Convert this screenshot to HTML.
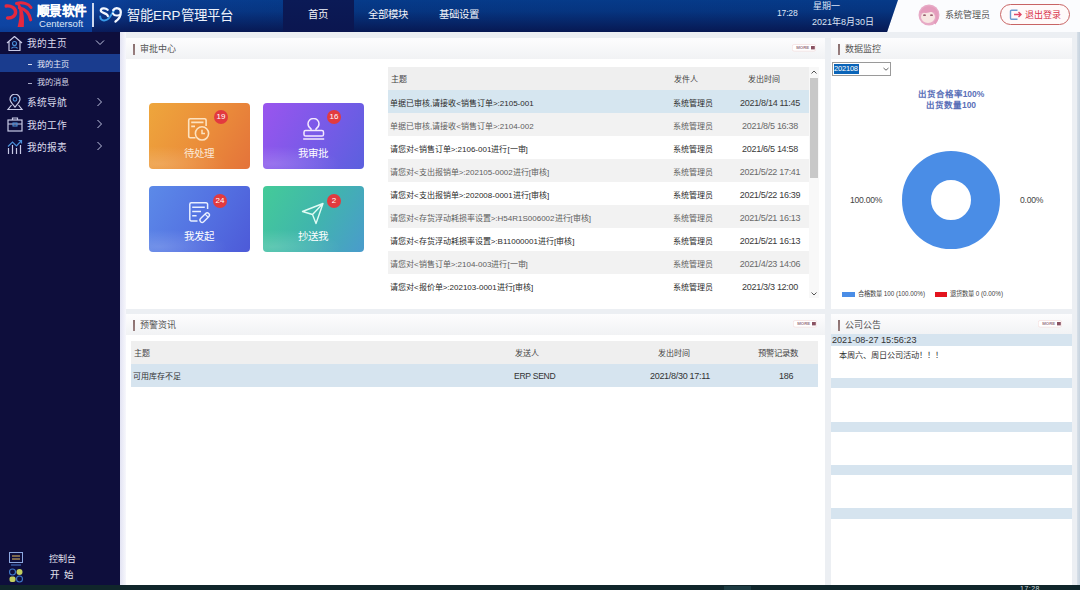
<!DOCTYPE html>
<html lang="zh-CN">
<head>
<meta charset="utf-8">
<style>
*{margin:0;padding:0;box-sizing:border-box;}
html,body{width:1080px;height:590px;overflow:hidden;background:#eceff3;font-family:"Liberation Sans",sans-serif;}
.abs{position:absolute;}
#hdr{position:absolute;left:0;top:0;width:1080px;height:32px;background:#fbfcfe;}
#hdrblue{position:absolute;left:0;top:0;width:898px;height:32px;
 background:linear-gradient(180deg,rgba(8,10,60,0) 0%,rgba(8,10,60,0.12) 35%,rgba(8,10,60,0.7) 100%),linear-gradient(90deg,#0f47a6 0px,#0e45a2 92px,#0a3d92 130px,#063b8a 300px,#063a88 100%);
 clip-path:polygon(0 0,898px 0,887px 32px,0 32px);}
#logobg{position:absolute;left:0;top:0;width:92px;height:32px;background:linear-gradient(180deg,#0f48a8 0%,#0e44a2 80%,#0c3c94 100%);}
.w{color:#fff;}
#side{position:absolute;left:0;top:32px;width:120px;height:553px;background:#0e0e3c;}
#taskbar{position:absolute;left:0;top:585px;width:1080px;height:5px;background:#10262b;}
.panel{position:absolute;background:#fff;}
.ptitle{position:absolute;left:0;top:0;right:0;height:21px;background:linear-gradient(180deg,#fdfdfe,#f1f2f4);}
.acc{position:absolute;left:6.5px;top:6px;width:2px;height:11px;background:linear-gradient(180deg,#8a7070,#9a8080);}
.ptxt{position:absolute;left:14px;top:5px;font-size:9px;color:#555;line-height:12px;}
.more{position:absolute;width:21px;height:8px;font-size:5px;color:#8a4a4a;line-height:8px;}
.t{position:absolute;white-space:nowrap;}
</style>
</head>
<body>
<div id="hdr"></div>
<div id="hdrblue"></div>
<div id="logobg"></div>

<!-- header content -->
<svg class="abs" style="left:2px;top:0px" width="36" height="32" viewBox="0 0 36 32">
 <path d="M4.2 6 C9.5 5.4 13.6 8.4 13.6 12 C13.6 15.8 9.8 18.4 5.6 18" fill="none" stroke="#e4283f" stroke-width="3.4" stroke-linecap="round"/>
 <path d="M14.2 3.4 C18 8 18.6 15 15.6 27 L21.8 27 C22.8 16 21 8.5 17 3 Z" fill="#e4283f"/>
 <path d="M14.5 3.4 C20.5 2 26.5 3.5 29 7.5" fill="none" stroke="#e4283f" stroke-width="3" stroke-linecap="round"/>
 <path d="M17.5 7.8 C23 9 27.2 13 28.6 19.8" fill="none" stroke="#e4283f" stroke-width="3.2" stroke-linecap="round"/>
</svg>
<div class="t w" style="left:37px;top:2.5px;font-size:12.6px;font-weight:bold;line-height:16px;letter-spacing:-0.7px;-webkit-text-stroke:0.2px #fff;">顺景软件</div>
<div class="t" style="left:39px;top:18px;font-size:9.6px;line-height:12px;color:#dfe6f5;">Centersoft</div>
<div class="abs" style="left:92px;top:3px;width:1.5px;height:24px;background:#cfd8ee;"></div>
<svg class="abs" style="left:94px;top:2px" width="32" height="28" viewBox="94 2 32 28">
 <path d="M100.2 16.5 C100.6 21.5 106.5 22 110.2 16.5 L114 10.5" fill="none" stroke="#3a9be8" stroke-width="1.9" stroke-linecap="round"/>
 <path d="M107.6 9.8 C105.5 7.6 100.8 7.8 100.8 10.6 C100.8 13.4 107.5 12.8 107.8 16" fill="none" stroke="#f4f8ff" stroke-width="2.3" stroke-linecap="round"/>
 <path d="M113.2 10.2 C115 7.2 120.8 7.6 120.8 12 C120.8 16.5 118.5 19.5 115.5 21.5" fill="none" stroke="#f4f8ff" stroke-width="2.3" stroke-linecap="round"/>
 <path d="M113 13.5 C114 15.5 116.5 16 119.5 15" fill="none" stroke="#f4f8ff" stroke-width="2" stroke-linecap="round"/>
</svg>
<div class="t w" style="left:127px;top:6px;font-size:13.4px;line-height:20px;color:#eef2fb;">智能ERP管理平台</div>
<div class="abs" style="left:283px;top:0;width:71px;height:32px;background:linear-gradient(180deg,#0b1a56 0%,#0b1650 100%);"></div>
<div class="t w" style="left:307.5px;top:7.5px;font-size:10.4px;line-height:14px;color:#f2f4fa;">首页</div>
<div class="t w" style="left:367.5px;top:7.5px;font-size:10.4px;line-height:14px;color:#f2f4fa;">全部模块</div>
<div class="t w" style="left:438.5px;top:7.5px;font-size:10.4px;line-height:14px;color:#f2f4fa;">基础设置</div>
<div class="t w" style="left:777px;top:8px;font-size:8.6px;letter-spacing:-0.2px;line-height:11px;color:#dde4f4;">17:28</div>
<div class="t w" style="left:813px;top:1px;font-size:9px;line-height:11px;color:#dde4f4;">星期一</div>
<div class="t w" style="left:812px;top:17px;font-size:9px;line-height:11px;color:#dde4f4;">2021年8月30日</div>
<svg class="abs" style="left:918px;top:4px" width="22" height="22" viewBox="0 0 22 22">
 <circle cx="11" cy="11" r="10.5" fill="#e7aac6"/>
 <ellipse cx="10" cy="13" rx="7" ry="6" fill="#f7e6e2"/>
 <path d="M2 9 C4 3 9 1.5 13 2.5 C17 3.5 20 6 20.5 11 C18 8 14 7.5 11 8.5 C8 9.5 5 8.5 2 9 Z" fill="#e49cbc"/>
 <ellipse cx="6.5" cy="11.2" rx="1.5" ry="0.9" fill="#9a6070"/>
 <ellipse cx="13.5" cy="11.2" rx="1.5" ry="0.9" fill="#9a6070"/>
 <path d="M17 9 C20 11 20 16 16.5 19.5" fill="none" stroke="#e49cbc" stroke-width="2.5"/>
</svg>
<div class="t" style="left:945px;top:10px;font-size:9px;line-height:11px;color:#555;">系统管理员</div>
<div class="abs" style="left:1000px;top:4px;width:70px;height:21px;border-radius:11px;border:1.2px solid #c86464;background:#fffafa;"></div>
<svg class="abs" style="left:1009px;top:8px" width="14" height="13" viewBox="0 0 14 13">
 <path d="M8.5 2.2 H2.5 A1 1 0 0 0 1.5 3.2 V10.3 A1 1 0 0 0 2.5 11.3 H8.5" fill="none" stroke="#6a9ad0" stroke-width="1.4"/>
 <path d="M5 6.5 H12 M9.5 4 L12 6.5 L9.5 9" fill="none" stroke="#e04868" stroke-width="1.4"/>
</svg>
<div class="t" style="left:1025px;top:10px;font-size:9px;line-height:11px;color:#d8344a;">退出登录</div>

<div id="side"></div>

<!-- sidebar content -->
<div class="abs" style="left:0;top:54px;width:120px;height:18px;background:#1a3c8e;"></div>
<svg class="abs" style="left:5px;top:35px" width="19" height="17" viewBox="0 0 19 17">
 <path d="M2 8 L9.5 1.5 L17 8 M4 6.5 V15.5 H15 V6.5" fill="none" stroke="#c9cbe6" stroke-width="1.2" stroke-linejoin="round"/>
 <circle cx="9.5" cy="8.5" r="2" fill="none" stroke="#4a8fd8" stroke-width="1.1"/>
 <path d="M6.5 13.5 C7 11.5 12 11.5 12.5 13.5" fill="none" stroke="#4a8fd8" stroke-width="1.1"/>
</svg>
<div class="t w" style="left:27px;top:37px;font-size:9.7px;line-height:13px;color:#dcdcee;">我的主页</div>
<svg class="abs" style="left:95px;top:39px" width="10" height="7" viewBox="0 0 10 7"><path d="M1 1.5 L5 5.5 L9 1.5" fill="none" stroke="#c0c4e0" stroke-width="1"/></svg>
<div class="abs" style="left:28px;top:63.5px;width:4px;height:1px;background:#d8ddf0;"></div>
<div class="t" style="left:36.5px;top:58.5px;font-size:8.2px;line-height:11px;color:#e4e8f6;">我的主页</div>
<div class="abs" style="left:28px;top:82.5px;width:4px;height:1px;background:#a8acc8;"></div>
<div class="t" style="left:36.5px;top:77px;font-size:8.2px;line-height:11px;color:#d4d6e8;">我的消息</div>

<svg class="abs" style="left:6px;top:94px" width="18" height="17" viewBox="0 0 18 17">
 <path d="M9 13 C6 9.5 4 7.5 4 5.2 A5 5 0 0 1 14 5.2 C14 7.5 12 9.5 9 13 Z" fill="none" stroke="#c9cbe6" stroke-width="1.2"/>
 <circle cx="9" cy="5.3" r="1.8" fill="none" stroke="#4a8fd8" stroke-width="1.1"/>
 <path d="M5.5 11 L2 15.5 H16 L12.5 11" fill="none" stroke="#c9cbe6" stroke-width="1.2"/>
</svg>
<div class="t w" style="left:27px;top:96px;font-size:9.7px;line-height:13px;color:#dcdcee;">系统导航</div>
<svg class="abs" style="left:96px;top:97px" width="7" height="10" viewBox="0 0 7 10"><path d="M1.5 1 L5.5 5 L1.5 9" fill="none" stroke="#c0c4e0" stroke-width="1"/></svg>

<svg class="abs" style="left:6px;top:116px" width="18" height="17" viewBox="0 0 18 17">
 <rect x="2" y="4" width="14" height="11" fill="none" stroke="#c9cbe6" stroke-width="1.2"/>
 <path d="M6.5 4 V2 H11.5 V4" fill="none" stroke="#c9cbe6" stroke-width="1.2"/>
 <path d="M2 8 H16" stroke="#c9cbe6" stroke-width="1"/>
 <rect x="7" y="7" width="4" height="3" fill="none" stroke="#4a8fd8" stroke-width="1.1"/>
</svg>
<div class="t w" style="left:27px;top:119px;font-size:9.7px;line-height:13px;color:#dcdcee;">我的工作</div>
<svg class="abs" style="left:96px;top:119px" width="7" height="10" viewBox="0 0 7 10"><path d="M1.5 1 L5.5 5 L1.5 9" fill="none" stroke="#c0c4e0" stroke-width="1"/></svg>

<svg class="abs" style="left:6px;top:138px" width="18" height="17" viewBox="0 0 18 17">
 <path d="M2.5 16 V10 M6.5 16 V7 M10.5 16 V10 M14.5 16 V7" stroke="#c9cbe6" stroke-width="1.2"/>
 <path d="M2 8.5 L6.5 4 L10.5 8 L15.5 2.5 M12.5 2.5 H15.5 V5.5" fill="none" stroke="#4a8fd8" stroke-width="1.2"/>
</svg>
<div class="t w" style="left:27px;top:140.5px;font-size:9.7px;line-height:13px;color:#dcdcee;">我的报表</div>
<svg class="abs" style="left:96px;top:141px" width="7" height="10" viewBox="0 0 7 10"><path d="M1.5 1 L5.5 5 L1.5 9" fill="none" stroke="#c0c4e0" stroke-width="1"/></svg>

<svg class="abs" style="left:8px;top:551px" width="16" height="32" viewBox="0 0 16 32">
 <rect x="1.5" y="1.5" width="13" height="10" fill="none" stroke="#8da8e0" stroke-width="1"/>
 <path d="M4 5 H12 M4 8 H12" stroke="#e8c060" stroke-width="1"/>
 <path d="M3 14 H13" stroke="#4f7fd0" stroke-width="1"/>
 <circle cx="4.5" cy="21" r="3" fill="none" stroke="#3f78c8" stroke-width="1.1"/>
 <circle cx="11.5" cy="21" r="3" fill="#c4d060"/>
 <rect x="1.5" y="25.5" width="6" height="5.5" rx="2" fill="#c4d060"/>
 <circle cx="11.5" cy="28" r="3" fill="none" stroke="#3f78c8" stroke-width="1.1"/>
</svg>
<div class="t" style="left:49px;top:554px;font-size:9px;line-height:11px;color:#e4e4f0;">控制台</div>
<div class="t" style="left:50px;top:569px;font-size:9.5px;line-height:11px;color:#e4e4f0;letter-spacing:4px;">开始</div>


<div id="taskbar"></div>
<div class="abs" style="left:724px;top:586px;width:27px;height:4px;background:#1d3b42;"></div>
<div class="t" style="left:1020px;top:585px;font-size:7px;line-height:8px;color:#cfd8dc;letter-spacing:0.5px;">17:28</div>

<!-- content strip left gradient -->
<div class="abs" style="left:120px;top:32px;width:6px;height:553px;background:linear-gradient(90deg,#e2e3f3,#f7f7fc);"></div>

<!-- Panel 1 -->
<div class="panel" style="left:126px;top:38px;width:699px;height:271px;">
  <div class="ptitle"></div>
  <div class="acc"></div>
  <div class="ptxt">审批中心</div>
</div>

<!-- cards -->
<style>
.card{position:absolute;width:101px;height:66px;border-radius:4px;overflow:hidden;}
.card::after{content:"";position:absolute;left:0;top:0;right:0;bottom:0;background:radial-gradient(ellipse 90% 35% at 10% 92%,rgba(255,255,255,0.16),rgba(255,255,255,0) 75%);}
.card .lbl{position:absolute;left:-1px;right:0;top:44px;text-align:center;font-size:10.5px;line-height:13px;color:#fff;}
.badge{position:absolute;width:14px;height:14px;border-radius:50%;background:#e23a3f;color:#fff;font-size:8px;line-height:14px;text-align:center;}
</style>
<div class="card" style="left:149px;top:103px;background:linear-gradient(120deg,#eea63c 0%,#eb8f3a 50%,#e4733a 100%);">
 <div class="lbl" style="color:#fbe9d6;">待处理</div>
 <svg class="abs" style="left:38px;top:14px" width="26" height="26" viewBox="0 0 26 26">
  <path d="M8.5 20.8 H3.2 A1.5 1.5 0 0 1 1.7 19.3 V3.3 A1.5 1.5 0 0 1 3.2 1.8 H17.6 A1.5 1.5 0 0 1 19.1 3.3 V9" fill="none" stroke="#fde2c0" stroke-width="1.6"/>
  <path d="M4.2 5.4 H16.5 M4.2 9.4 H8" stroke="#fde2c0" stroke-width="1.6"/>
  <circle cx="15" cy="16.4" r="6.6" fill="none" stroke="#fde2c0" stroke-width="1.6"/>
  <path d="M15 12.8 V16.6 H18" fill="none" stroke="#fde2c0" stroke-width="1.5"/>
</svg>
 <div class="badge" style="left:65px;top:7px;">19</div>
</div>
<div class="card" style="left:263px;top:103px;background:linear-gradient(120deg,#9a55ee 0%,#7a5ae8 50%,#5b60de 100%);">
 <div class="lbl">我审批</div>
 <svg class="abs" style="left:38px;top:15px" width="26" height="26" viewBox="0 0 26 26">
  <path d="M10 12.6 V10.8 C8 9.5 7 7.5 7 5.8 A5.5 5.3 0 0 1 18 5.8 C18 7.5 17 9.5 15 10.8 V12.6" fill="none" stroke="#f3e8ff" stroke-width="1.5" stroke-linejoin="round"/>
  <rect x="3" y="12.6" width="19.5" height="5.4" rx="1.6" fill="none" stroke="#f3e8ff" stroke-width="1.5"/>
  <path d="M2.2 21 H23.2" stroke="#f3e8ff" stroke-width="1.5"/>
</svg>
 <div class="badge" style="left:64px;top:7px;">16</div>
</div>
<div class="card" style="left:149px;top:186px;background:linear-gradient(120deg,#5c8ae8 0%,#5473e2 50%,#4d5ad8 100%);">
 <div class="lbl">我发起</div>
 <svg class="abs" style="left:39px;top:15px" width="26" height="26" viewBox="0 0 26 26">
  <path d="M9.5 19.9 H3.3 A1.5 1.5 0 0 1 1.8 18.4 V3.3 A1.5 1.5 0 0 1 3.3 1.8 H18.1 A1.5 1.5 0 0 1 19.6 3.3 V8" fill="none" stroke="#e8efff" stroke-width="1.5"/>
  <path d="M4.2 6.2 H16.8 M4.2 10.4 H13 M4.2 14.8 H8.6" stroke="#e8efff" stroke-width="1.5"/>
  <g transform="rotate(-45 16.5 16.8)"><rect x="11" y="14.6" width="11.5" height="4.4" rx="2.2" fill="none" stroke="#e8efff" stroke-width="1.4"/><path d="M19.5 14.6 V19" stroke="#e8efff" stroke-width="1.2"/></g>
</svg>
 <div class="badge" style="left:64px;top:8px;">24</div>
</div>
<div class="card" style="left:263px;top:186px;background:linear-gradient(120deg,#44cb98 0%,#40b6ac 50%,#4a9bcc 100%);">
 <div class="lbl">抄送我</div>
 <svg class="abs" style="left:38px;top:16px" width="24" height="24" viewBox="0 0 24 24">
  <path d="M1.5 9.5 L22 1.5 L15 21.5 L11.5 12.5 Z M11.5 12.5 L22 1.5" fill="none" stroke="#e0fbf4" stroke-width="1.4" stroke-linejoin="round"/>
 </svg>
 <div class="badge" style="left:64px;top:8px;">2</div>
</div>

<!-- table 1 -->
<div class="abs" style="left:388px;top:67px;width:421px;height:23px;background:#efefef;"></div>
<div class="t" style="left:391px;top:74px;font-size:8px;line-height:11px;color:#444;">主题</div>
<div class="t" style="left:674px;top:74px;font-size:8px;line-height:11px;color:#444;">发件人</div>
<div class="t" style="left:748px;top:74px;font-size:8px;line-height:11px;color:#444;">发出时间</div>
<div class="abs" style="left:388px;top:90px;width:421px;height:23px;background:#d6e6f0;"></div>
<div class="t" style="left:390px;top:98px;font-size:8px;line-height:11px;color:#2a2a2a;">单据已审核,请接收&lt;销售订单&gt;:2105-001</div>
<div class="t" style="left:673px;top:98px;font-size:8px;line-height:11px;color:#2a2a2a;">系统管理员</div>
<div class="t" style="left:730px;width:80px;text-align:center;top:98px;font-size:9px;letter-spacing:-0.3px;line-height:11px;color:#3a3a3a;">2021/8/14 11:45</div>
<div class="abs" style="left:388px;top:113px;width:421px;height:23px;background:#f2f2f2;"></div>
<div class="t" style="left:390px;top:121px;font-size:8px;line-height:11px;color:#606060;">单据已审核,请接收&lt;销售订单&gt;:2104-002</div>
<div class="t" style="left:673px;top:121px;font-size:8px;line-height:11px;color:#606060;">系统管理员</div>
<div class="t" style="left:730px;width:80px;text-align:center;top:121px;font-size:9px;letter-spacing:-0.3px;line-height:11px;color:#6a6a6a;">2021/8/5 16:38</div>
<div class="abs" style="left:388px;top:136px;width:421px;height:23px;background:#ffffff;"></div>
<div class="t" style="left:390px;top:144px;font-size:8px;line-height:11px;color:#2a2a2a;">请您对&lt;销售订单&gt;:2106-001进行[一审]</div>
<div class="t" style="left:673px;top:144px;font-size:8px;line-height:11px;color:#2a2a2a;">系统管理员</div>
<div class="t" style="left:730px;width:80px;text-align:center;top:144px;font-size:9px;letter-spacing:-0.3px;line-height:11px;color:#3a3a3a;">2021/6/5 14:58</div>
<div class="abs" style="left:388px;top:159px;width:421px;height:23px;background:#f2f2f2;"></div>
<div class="t" style="left:390px;top:167px;font-size:8px;line-height:11px;color:#606060;">请您对&lt;支出报销单&gt;:202105-0002进行[审核]</div>
<div class="t" style="left:673px;top:167px;font-size:8px;line-height:11px;color:#606060;">系统管理员</div>
<div class="t" style="left:730px;width:80px;text-align:center;top:167px;font-size:9px;letter-spacing:-0.3px;line-height:11px;color:#6a6a6a;">2021/5/22 17:41</div>
<div class="abs" style="left:388px;top:182px;width:421px;height:23px;background:#ffffff;"></div>
<div class="t" style="left:390px;top:190px;font-size:8px;line-height:11px;color:#2a2a2a;">请您对&lt;支出报销单&gt;:202008-0001进行[审核]</div>
<div class="t" style="left:673px;top:190px;font-size:8px;line-height:11px;color:#2a2a2a;">系统管理员</div>
<div class="t" style="left:730px;width:80px;text-align:center;top:190px;font-size:9px;letter-spacing:-0.3px;line-height:11px;color:#3a3a3a;">2021/5/22 16:39</div>
<div class="abs" style="left:388px;top:205px;width:421px;height:23px;background:#f2f2f2;"></div>
<div class="t" style="left:390px;top:213px;font-size:8px;line-height:11px;color:#606060;">请您对&lt;存货浮动耗损率设置&gt;:H54R1S006002进行[审核]</div>
<div class="t" style="left:673px;top:213px;font-size:8px;line-height:11px;color:#606060;">系统管理员</div>
<div class="t" style="left:730px;width:80px;text-align:center;top:213px;font-size:9px;letter-spacing:-0.3px;line-height:11px;color:#6a6a6a;">2021/5/21 16:13</div>
<div class="abs" style="left:388px;top:228px;width:421px;height:23px;background:#ffffff;"></div>
<div class="t" style="left:390px;top:236px;font-size:8px;line-height:11px;color:#2a2a2a;">请您对&lt;存货浮动耗损率设置&gt;:B11000001进行[审核]</div>
<div class="t" style="left:673px;top:236px;font-size:8px;line-height:11px;color:#2a2a2a;">系统管理员</div>
<div class="t" style="left:730px;width:80px;text-align:center;top:236px;font-size:9px;letter-spacing:-0.3px;line-height:11px;color:#3a3a3a;">2021/5/21 16:13</div>
<div class="abs" style="left:388px;top:251px;width:421px;height:23px;background:#f2f2f2;"></div>
<div class="t" style="left:390px;top:259px;font-size:8px;line-height:11px;color:#606060;">请您对&lt;销售订单&gt;:2104-003进行[一审]</div>
<div class="t" style="left:673px;top:259px;font-size:8px;line-height:11px;color:#606060;">系统管理员</div>
<div class="t" style="left:730px;width:80px;text-align:center;top:259px;font-size:9px;letter-spacing:-0.3px;line-height:11px;color:#6a6a6a;">2021/4/23 14:06</div>
<div class="abs" style="left:388px;top:274px;width:421px;height:23px;background:#ffffff;"></div>
<div class="t" style="left:390px;top:282px;font-size:8px;line-height:11px;color:#2a2a2a;">请您对&lt;报价单&gt;:202103-0001进行[审核]</div>
<div class="t" style="left:673px;top:282px;font-size:8px;line-height:11px;color:#2a2a2a;">系统管理员</div>
<div class="t" style="left:730px;width:80px;text-align:center;top:282px;font-size:9px;letter-spacing:-0.3px;line-height:11px;color:#3a3a3a;">2021/3/3 12:00</div>
<div class="abs" style="left:809px;top:67px;width:10px;height:231px;background:#f8f8f8;"></div>
<div class="abs" style="left:810px;top:78px;width:8px;height:100px;background:#c8c8c8;"></div>
<svg class="abs" style="left:810px;top:69px" width="8" height="6" viewBox="0 0 8 6"><path d="M1.5 4.5 L4 2 L6.5 4.5" fill="none" stroke="#555" stroke-width="1"/></svg>
<svg class="abs" style="left:810px;top:291px" width="8" height="6" viewBox="0 0 8 6"><path d="M1.5 1.5 L4 4 L6.5 1.5" fill="none" stroke="#555" stroke-width="1"/></svg>
<svg class="abs" style="left:792px;top:44px" width="24" height="8" viewBox="0 0 24 8"><rect x="0.3" y="0.5" width="23.4" height="6.6" rx="1.8" fill="#fff" stroke="#f3d6d6" stroke-width="0.6"/><text x="4.2" y="5.3" font-size="4.3" fill="#9a7686" font-family="Liberation Sans" font-weight="bold" textLength="13" lengthAdjust="spacingAndGlyphs">MORE</text><rect x="19" y="2" width="3.8" height="3.4" fill="#8a5262"/></svg>
<!-- Panel 2 -->
<div class="panel" style="left:831px;top:38px;width:241px;height:271px;">
  <div class="ptitle"></div>
  <div class="acc"></div>
  <div class="ptxt">数据监控</div>
</div>

<!-- panel 2 content -->

<div class="abs" style="left:832px;top:62px;width:59px;height:14px;border:1px solid #9a9a9a;background:#fff;"></div>
<div class="abs" style="left:834px;top:64px;width:25px;height:10px;background:#0a64b8;"></div>
<div class="t" style="left:834px;top:64px;font-size:7.5px;letter-spacing:-0.2px;line-height:10px;color:#fff;">202108</div>
<svg class="abs" style="left:882px;top:66px" width="8" height="6" viewBox="0 0 8 6"><path d="M1.5 2 L4 4.2 L6.5 2" fill="none" stroke="#555" stroke-width="0.9"/></svg>
<div class="t" style="left:871px;width:160px;text-align:center;top:88.7px;font-size:8.5px;font-weight:bold;line-height:11px;color:#5a70b8;">出货合格率100%</div>
<div class="t" style="left:871px;width:160px;text-align:center;top:99.7px;font-size:8.5px;font-weight:bold;line-height:11px;color:#5a70b8;">出货数量100</div>
<svg class="abs" style="left:901px;top:150px" width="100" height="100" viewBox="0 0 100 100">
 <circle cx="50" cy="50" r="34.5" fill="none" stroke="#4a8de6" stroke-width="29"/>
</svg>
<div class="t" style="left:850px;top:195px;font-size:8.6px;letter-spacing:-0.25px;line-height:11px;color:#444;">100.00%</div>
<div class="t" style="left:1020px;top:195px;font-size:8.6px;letter-spacing:-0.25px;line-height:11px;color:#444;">0.00%</div>
<div class="abs" style="left:842px;top:292px;width:13px;height:5px;background:#4a8de6;"></div>
<div class="t" style="left:858px;top:289px;font-size:6.3px;line-height:10px;color:#444;">合格数量 100 (100.00%)</div>
<div class="abs" style="left:935px;top:292px;width:12px;height:5px;background:#e3141e;"></div>
<div class="t" style="left:950px;top:289px;font-size:6.3px;line-height:10px;color:#444;">退货数量 0 (0.00%)</div>

<!-- Panel 3 -->
<div class="panel" style="left:126px;top:314px;width:699px;height:271px;">
  <div class="ptitle"></div>
  <div class="acc"></div>
  <div class="ptxt">预警资讯</div>
</div>
<!-- Panel 4 -->
<div class="panel" style="left:831px;top:314px;width:241px;height:271px;">
  <div class="ptitle"></div>
  <div class="acc"></div>
  <div class="ptxt">公司公告</div>
</div>

<!-- panel 3 content -->
<div class="abs" style="left:131px;top:341px;width:687px;height:23px;background:#efefef;"></div>
<div class="abs" style="left:131px;top:364px;width:687px;height:23px;background:#d6e4ef;"></div>
<div class="t" style="left:134px;top:348px;font-size:8px;line-height:11px;color:#444;">主题</div>
<div class="t" style="left:515px;top:348px;font-size:8px;line-height:11px;color:#444;">发送人</div>
<div class="t" style="left:658px;top:348px;font-size:8px;line-height:11px;color:#444;">发出时间</div>
<div class="t" style="left:758px;top:348px;font-size:8.4px;line-height:11px;color:#444;">预警记录数</div>
<div class="t" style="left:133px;top:371px;font-size:8px;line-height:11px;color:#333;">可用库存不足</div>
<div class="t" style="left:514px;top:371px;font-size:8.6px;letter-spacing:-0.3px;line-height:11px;color:#333;">ERP SEND</div>
<div class="t" style="left:650px;top:371px;font-size:9px;letter-spacing:-0.3px;line-height:11px;color:#333;">2021/8/30 17:11</div>
<div class="t" style="left:779px;top:371px;font-size:9px;letter-spacing:-0.3px;line-height:11px;color:#333;">186</div>
<svg class="abs" style="left:793px;top:320px" width="24" height="8" viewBox="0 0 24 8"><rect x="0.3" y="0.5" width="23.4" height="6.6" rx="1.8" fill="#fff" stroke="#f3d6d6" stroke-width="0.6"/><text x="4.2" y="5.3" font-size="4.3" fill="#9a7686" font-family="Liberation Sans" font-weight="bold" textLength="13" lengthAdjust="spacingAndGlyphs">MORE</text><rect x="19" y="2" width="3.8" height="3.4" fill="#8a5262"/></svg>
<!-- panel 4 content -->
<svg class="abs" style="left:1038px;top:320px" width="24" height="8" viewBox="0 0 24 8"><rect x="0.3" y="0.5" width="23.4" height="6.6" rx="1.8" fill="#fff" stroke="#f3d6d6" stroke-width="0.6"/><text x="4.2" y="5.3" font-size="4.3" fill="#9a7686" font-family="Liberation Sans" font-weight="bold" textLength="13" lengthAdjust="spacingAndGlyphs">MORE</text><rect x="19" y="2" width="3.8" height="3.4" fill="#8a5262"/></svg>
<div class="abs" style="left:831px;top:334px;width:241px;height:12px;background:#d6e4ef;"></div>
<div class="t" style="left:832px;top:334px;font-size:9.1px;line-height:12px;color:#333;">2021-08-27 15:56:23</div>
<div class="t" style="left:839px;top:350px;font-size:8.2px;line-height:11px;color:#333;">本周六、周日公司活动！！！</div>
<div class="abs" style="left:831px;top:378px;width:241px;height:10px;background:#d6e4ef;"></div>
<div class="abs" style="left:831px;top:422px;width:241px;height:10px;background:#d6e4ef;"></div>
<div class="abs" style="left:831px;top:465px;width:241px;height:10px;background:#d6e4ef;"></div>
<div class="abs" style="left:831px;top:508px;width:241px;height:11px;background:#d6e4ef;"></div>
<div class="abs" style="left:1077px;top:32px;width:3px;height:553px;background:linear-gradient(90deg,#d8e0e8,#c6d2de);"></div>


</body>
</html>
